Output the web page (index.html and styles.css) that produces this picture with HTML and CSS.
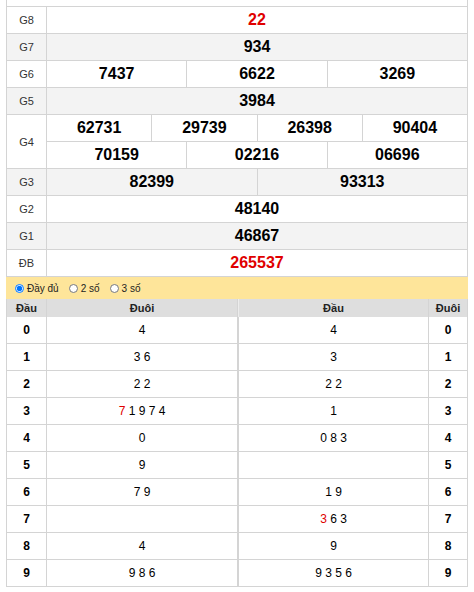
FILE: index.html
```html
<!DOCTYPE html>
<html lang="vi">
<head>
<meta charset="utf-8">
<title>KQXS</title>
<link rel="stylesheet" href="styles.css">
</head>
<body>
<div class="kq">
  <div class="row top"></div>
  <div class="row"><div class="lbl">G8</div><div class="vals"><div class="v red">22</div></div></div>
  <div class="row alt"><div class="lbl">G7</div><div class="vals"><div class="v">934</div></div></div>
  <div class="row"><div class="lbl">G6</div><div class="vals"><div class="v">7437</div><div class="v">6622</div><div class="v">3269</div></div></div>
  <div class="row alt"><div class="lbl">G5</div><div class="vals"><div class="v">3984</div></div></div>
  <div class="row dbl"><div class="lbl">G4</div>
    <div class="vals stack">
      <div class="sub"><div class="v">62731</div><div class="v">29739</div><div class="v">26398</div><div class="v">90404</div></div>
      <div class="sub"><div class="v">70159</div><div class="v">02216</div><div class="v">06696</div></div>
    </div>
  </div>
  <div class="row alt"><div class="lbl">G3</div><div class="vals"><div class="v">82399</div><div class="v">93313</div></div></div>
  <div class="row"><div class="lbl">G2</div><div class="vals"><div class="v">48140</div></div></div>
  <div class="row alt"><div class="lbl">G1</div><div class="vals"><div class="v">46867</div></div></div>
  <div class="row"><div class="lbl">ĐB</div><div class="vals"><div class="v red">265537</div></div></div>
</div>
<div class="opts">
  <label class="opt"><input type="radio" name="mode" checked>Đầy đủ</label>
  <label class="opt"><input type="radio" name="mode">2 số</label>
  <label class="opt"><input type="radio" name="mode">3 số</label>
</div>
<div class="loto">
  <div class="lt left">
    <div class="lh"><div class="c1">Đầu</div><div class="c2">Đuôi</div></div>
    <div class="lr"><div class="c1">0</div><div class="c2">4</div></div>
    <div class="lr"><div class="c1">1</div><div class="c2">3 6</div></div>
    <div class="lr"><div class="c1">2</div><div class="c2">2 2</div></div>
    <div class="lr"><div class="c1">3</div><div class="c2"><span class="red">7</span>&nbsp;1 9 7 4</div></div>
    <div class="lr"><div class="c1">4</div><div class="c2">0</div></div>
    <div class="lr"><div class="c1">5</div><div class="c2">9</div></div>
    <div class="lr"><div class="c1">6</div><div class="c2">7 9</div></div>
    <div class="lr"><div class="c1">7</div><div class="c2"></div></div>
    <div class="lr"><div class="c1">8</div><div class="c2">4</div></div>
    <div class="lr"><div class="c1">9</div><div class="c2">9 8 6</div></div>
  </div>
  <div class="lt right">
    <div class="lh"><div class="c2">Đầu</div><div class="c1">Đuôi</div></div>
    <div class="lr"><div class="c2">4</div><div class="c1">0</div></div>
    <div class="lr"><div class="c2">3</div><div class="c1">1</div></div>
    <div class="lr"><div class="c2">2 2</div><div class="c1">2</div></div>
    <div class="lr"><div class="c2">1</div><div class="c1">3</div></div>
    <div class="lr"><div class="c2">0 8 3</div><div class="c1">4</div></div>
    <div class="lr"><div class="c2"></div><div class="c1">5</div></div>
    <div class="lr"><div class="c2">1 9</div><div class="c1">6</div></div>
    <div class="lr"><div class="c2"><span class="red">3</span>&nbsp;6 3</div><div class="c1">7</div></div>
    <div class="lr"><div class="c2">9</div><div class="c1">8</div></div>
    <div class="lr"><div class="c2">9 3 5 6</div><div class="c1">9</div></div>
  </div>
</div>
</body>
</html>
```
FILE: styles.css
```css
* { box-sizing: border-box; }
body {
  margin: 0;
  padding: 0 6px;
  background: #fff;
  font-family: "Liberation Sans", Arial, sans-serif;
  color: #000;
}
.kq {
  border-left: 1px solid #d4d4d4;
  border-right: 1px solid #d4d4d4;
}
.row {
  display: flex;
  height: 27px;
  border-bottom: 1px solid #d4d4d4;
  background: #fff;
}
.row.top { height: 7px; }
.row.alt { background: #f3f3f3; }
.row.dbl { height: 54px; }
.lbl {
  width: 40px;
  flex: none;
  border-right: 1px solid #d4d4d4;
  display: flex;
  align-items: center;
  justify-content: center;
  font-size: 11px;
  color: #333;
}
.vals {
  flex: 1;
  display: flex;
}
.vals.stack { flex-direction: column; }
.sub {
  flex: 1;
  display: flex;
}
.sub + .sub { border-top: 1px solid #d4d4d4; }
.v {
  flex: 1;
  display: flex;
  align-items: center;
  justify-content: center;
  font-size: 16px;
  font-weight: bold;
}
.v + .v { border-left: 1px solid #d4d4d4; }
.red { color: #e00000; }

.opts {
  height: 22px;
  background: #fee59a;
  display: flex;
  align-items: center;
  padding-left: 8px;
  font-size: 10px;
  color: #222;
}
.opt {
  display: flex;
  align-items: center;
  margin-right: 9px;
}
.opt input {
  width: 9px;
  height: 9px;
  margin: 0 3px 0 1px;
}

.loto { display: flex; }
.lt { border-left: 1px solid #d4d4d4; border-right: 1px solid #d4d4d4; }
.lt.left { width: 232px; flex: none; }
.lt.right { flex: 1; border-left: none; }
.lh {
  display: flex;
  height: 18px;
  background: #dedede;
  font-size: 11px;
  font-weight: bold;
  color: #222;
}
.lh .c1, .lh .c2 { border: none; }
.lr {
  display: flex;
  height: 27px;
  border-bottom: 1px solid #d4d4d4;
  font-size: 12px;
}
.c1, .c2 {
  display: flex;
  align-items: center;
  justify-content: center;
}
.c1 { width: 40px; flex: none; font-weight: bold; }
.left .c1 { border-right: 1px solid #d4d4d4; }
.right .c1 { border-left: 1px solid #d4d4d4; width: 39px; }
.c2 { flex: 1; }
.lh .c1 { font-weight: bold; }
.right { border-left: 1px solid #d4d4d4; }
.lt.right { border-left: 1px solid #d4d4d4; }
.right .lh { border-left: 1px solid #ececec; margin-left: -1px; }
```
